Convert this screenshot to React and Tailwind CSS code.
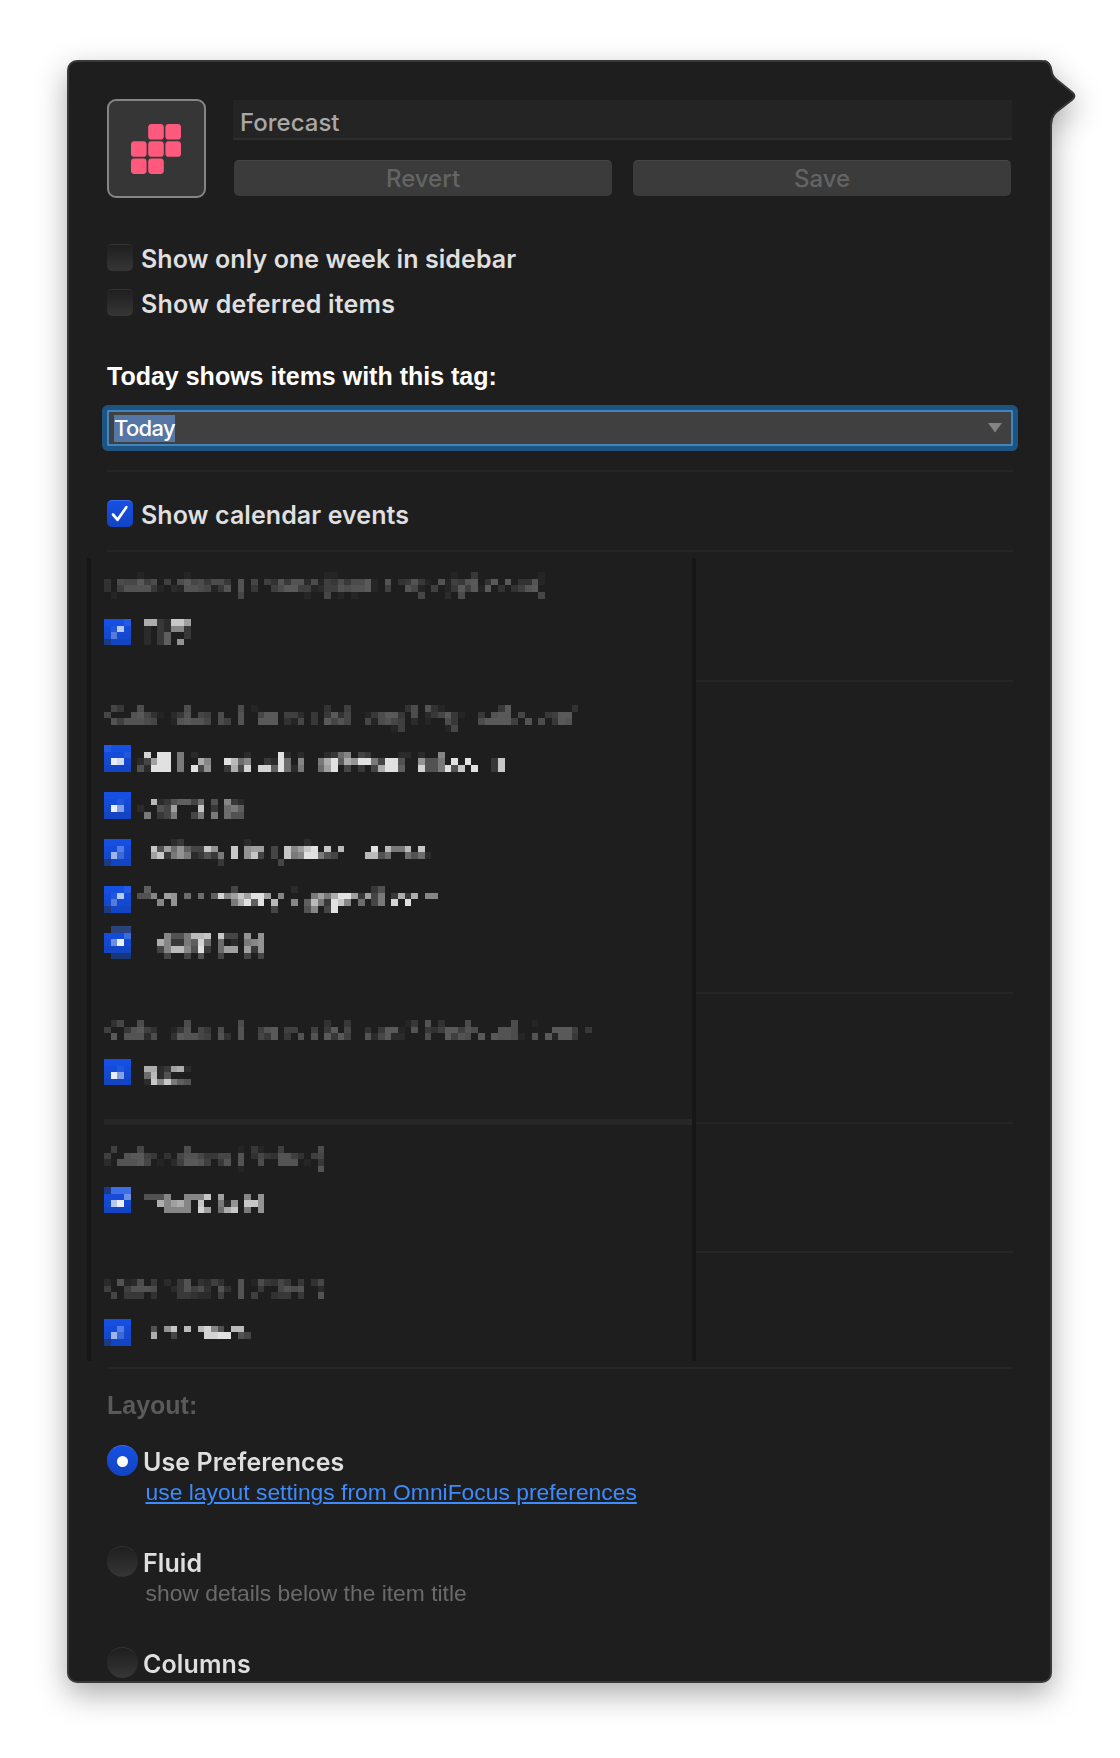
import React from "react";

const CELL = 6.68;

// Each text row is a list of "column:levels" runs; levels are hex brightness digits.
// Each box row has four characters: 0-9 white overlay, x dark, d dim, . empty.
const ROWS = [
  { gap: 14, h: 4, dim: true, text: [
    "5:1 12:1 33:11 52:1 55:4 65:1",
    "0:3 2:766957 9:5 11:79674774 20:8 22:6 24:538488271 33:54747791 42:8 44:34841 50:815489 57:39 60:9 62:3381",
    "0:3 2:5888841 10:218876148 20:8 22:4 25:57995512 33:55878891 42:5 45:861 49:5 51:14959 56:19 59:3 61:3589",
    "1:1 20:6 30:1 33:6 35:101 47:6 51:2 53:7 65:6"] },
  { gap: 20, h: 4, box: ["0001", "0170", "0300", "x000"], text: [
    "6:bb21dda", "6:1 8:21882", "6:1 8:25 12:2", "6:1 8:25 11:9"] },
  { gap: 60, h: 4, dim: true, text: [
    "1:64 5:7 12:7 20:7 22:1 33:3 36:5 45:37 48:831 59:49 70:3",
    "0:6 4:89631 10:248 14:65 17:7 20:8 23:699 27:552 31:4 33:4936 39:147994 46:7 48:246941 56:4 58:899 62:6 66:4599",
    "1:8588876 10:189886 17:75 20:8 23:999 27:316 31:4 33:9686 39:617865 46:2 48:1 51:74 56:799995 63:8 65:7 67:498",
    "43:15 51:16"] },
  { gap: 13.3, h: 4, box: ["1000", "0001", "0980", "0000"], text: [
    "", "6:e 8:ff 11:7 13:1 21:1 26:f1 29:1 33:1268 38:32 44:11 47:1 50:8",
    "5:13aff 11:7 14:b8 18:fc68 24:21f6 29:8 32:7bf5b9ff73ff4 47:9447 52:f 54:f 58:2d",
    "5:41fff 11:7 13:f39 18:2b3e 23:ee5f617 32:6af 36:3 38:2 40:3bff5 47:e447f4d 55:f 58:2d"] },
  { gap: 20.3, h: 4, box: ["0000", "0010", "0950", "0000"], text: [
    "", "7:c1245536 16:4 18:821", "5:1 8:43a 14:d 16:2 18:675", "6:7 8:237 13:37 16:7 18:644"] },
  { gap: 20.3, h: 4, box: ["0000", "0030", "0620", "x000"], text: [
    "10:12 21:1 30:1",
    "7:d4a69533d9 19:d 21:9aa 25:3 27:d8adf 33:d 35:c 40:f 42:c77c 47:d",
    "7:ad279712427 19:d 21:9d3 25:3 27:d78ff743 39:cc46 45:6461",
    "17:2 26:3"] },
  { gap: 19.7, h: 4, box: ["0001", "0170", "0300", "x000"], text: [
    "6:5 19:3 28:1 40:24",
    "5:448 9:a9 12:6 14:6 16:5e8adaffa 26:8 31:7a7bffa2a37 43:2b2b 48:88",
    "8:8 10:9 19:7bf5f 25:c 28:8 30:5c72fd8 38:6 40:37 43:e 45:f",
    "25:3 30:48 33:3f"] },
  { gap: 13.3, h: 5, box: [".ddd", "0002", "0490", "0000", ".ddd"], text: [
    "", "9:8447ccd 17:d33 21:9 23:9", "8:b82275e6 17:6 19:1 21:789", "8:38cc84f2 17:6aa 21:a29",
    "9:3 12:3 14:4 17:3 21:3 23:3"] },
  { gap: 60.3, h: 3, dim: true, text: [
    "1:36 5:7 12:7 20:7 33:3 36:4 45:14 48:8 50:3 54:7 61:7 64:1",
    "0:5 3:48953 10:148 14:64 17:7 20:8 23:589 27:55 31:5 33:49 36:6 39:3 41:4991 46:8 48:43599587 59:887 67:9995 72:4",
    "1:9 3:88827 10:398865 17:83 20:8 23:649 27:4 29:8 31:8 33:9495 39:826922 48:7 51:9587 56:9 58:98871 64:8 66:91994"] },
  { gap: 19, h: 4, box: ["0000", "0010", "0950", "0000"], text: [
    "", "6:bb12ab1", "6:6c14", "6:1d8d754"] },
  { gap: 33.3, h: 1, line: true },
  { gap: 20.3, h: 4, dim: true, text: [
    "1:5 5:6 12:7 20:1 22:41 26:5 32:7",
    "0:5 3:89954 9:3 11:68864466 20:8 22:36438853 31:56",
    "0:2 2:88896 8:1 10:259985 17:48 20:8 23:7 26:888 30:1 32:4",
    "20:1 32:8"] },
  { gap: 14.3, h: 4, box: ["x222", "0004", "0790", "0000"], text: [
    "", "6:4448 12:888d 17:a 21:8 23:9", "8:b8ab8 14:d 17:719 21:dd9", "9:8888 14:ea 17:6bd 21:7 23:9"] },
  { gap: 66, h: 3, dim: true, text: [
    "0:2 2:8127 7:4 9:2 11:48 14:3253 20:8 22:174364 29:4 31:36",
    "0:5 3:58887 10:248573 17:83 20:8 23:4 26:6878 32:2",
    "1:6 3:444 7:3 11:44322 17:5 20:8 22:5 25:344 29:4 32:8"] },
  { gap: 20, h: 4, box: ["0000", "0030", "0620", "x000"], text: [
    "", "7:4 9:9d 12:c 14:ce84 19:cc", "7:b 10:3 15:eeff 20:43"] },
];

const BLUES = ["#1550e2", "#144bd8", "#1348cf", "#1244c4", "#1a377c"];

function boxColor(ch, r) {
  if (ch === "x") return "#1b3a86";
  if (ch === "d") return r === 0 ? "#2a437c" : "#183777";
  const base = BLUES[r];
  return ch === "0" ? base : `color-mix(in srgb, white ${Number(ch) * 10.5 - 4}%, ${base})`;
}

function MosaicRow({ row }) {
  const rects = [];
  const add = (c, r, fill) =>
    rects.push(<rect key={`${c}-${r}-${rects.length}`} x={c * CELL} y={r * CELL} width={CELL} height={CELL} fill={fill} />);
  (row.box || []).forEach((line, r) =>
    [...line].forEach((ch, c) => ch !== "." && add(c, r, boxColor(ch, r))));
  (row.text || []).forEach((line, r) =>
    line.split(" ").filter(Boolean).forEach((run) => {
      const [start, levels] = run.split(":");
      [...levels].forEach((d, i) => {
        const v = parseInt(d, 16);
        if (!v) return;
        const g = 30 + v * (row.dim ? 6.6 : 13);
        add(Number(start) + i, r, `rgb(${g},${g},${g})`);
      });
    }));
  return (
    <svg
      className="block w-[588px] shrink-0"
      style={{ marginTop: row.gap, height: row.h * CELL }}
      shapeRendering="crispEdges"
      aria-hidden="true"
    >
      {row.line ? <rect width="588" height={CELL} fill="#272727" /> : rects}
    </svg>
  );
}

function CheckBox({ checked }) {
  return checked ? (
    <span className="flex h-[27px] w-[26px] items-center justify-center rounded-[5px] border-t border-[#3a6cec] bg-linear-to-b from-[#1650e4] to-[#1243c2]">
      <svg width="20" height="20" viewBox="0 0 20 20" fill="none" stroke="white" strokeWidth="2.7" strokeLinecap="round" strokeLinejoin="round">
        <path d="M3 10.5 7.6 15.8 16.3 3.2" />
      </svg>
    </span>
  ) : (
    <span className="h-[27px] w-[26px] rounded-[5px] border-t border-[#333] bg-linear-to-b from-[#1f1f1f] to-[#363636]" />
  );
}

function Check({ label, checked, className, tracking }) {
  return (
    <label className={`flex h-[27px] items-center gap-[8px] ${className}`}>
      <CheckBox checked={checked} />
      <span className={`relative top-[1.5px] text-[25px] leading-none font-semibold whitespace-nowrap text-[#dfdfdf] ${tracking}`}>{label}</span>
    </label>
  );
}

function Radio({ label, checked, detail, className }) {
  return (
    <div className={`h-[101px] shrink-0 ${className || ""}`}>
      <div className="flex h-[31px] items-center gap-[5px]">
        {checked ? (
          <span className="flex size-[31px] items-center justify-center rounded-full border-t border-[#3a6cec] bg-linear-to-b from-[#1650e4] to-[#1243c2]">
            <span className="size-[11px] rounded-full bg-white" />
          </span>
        ) : (
          <span className="size-[31px] rounded-full border-t border-[#333] bg-linear-to-b from-[#1f1f1f] to-[#363636]" />
        )}
        <span className="relative top-[1.5px] text-[25px] leading-none font-semibold tracking-[0.1px] whitespace-nowrap text-[#dfdfdf]">{label}</span>
      </div>
      <div className="mt-[2px] pl-[38.5px] font-['Liberation_Sans',sans-serif] text-[22.85px] leading-[28px] whitespace-nowrap">{detail}</div>
    </div>
  );
}

const Divider = ({ className }) => <div className={`h-[2px] shrink-0 bg-[#262626] ${className || ""}`} />;

export default function App() {
  return (
    <main className="h-[1758px] w-[1120px] overflow-hidden bg-white pt-[60px] pl-[67px] font-['Inter',sans-serif]">
      <div className="relative h-[1623px] w-[985px] drop-shadow-[0_11px_15px_rgba(0,0,0,0.33)]">
        <div className="flex h-full flex-col overflow-hidden rounded-[10px] border-2 border-[#383938] bg-[#1e1e1e] pr-[37px] pl-[38px]">
          <header className="mt-[37px] flex h-[99px] shrink-0 gap-[27px]">
            <div className="flex w-[99px] shrink-0 items-center justify-center rounded-[9px] border-2 border-[#858585] bg-[#363636] pr-px">
              <svg width="50" height="50" viewBox="0 0 50 50" fill="#ff5a7e">
                {[[17.2, 0], [34.4, 0], [0, 17.2], [17.2, 17.2], [34.4, 17.2], [0, 34.4], [17.2, 34.4]].map(([x, y]) => (
                  <rect key={`${x}-${y}`} x={x} y={y} width="15.6" height="15.6" rx="3.4" />
                ))}
              </svg>
            </div>
            <div className="min-w-0 flex-1">
              <div className="mt-px mr-px h-[40px] border-b-2 border-[#2e2e2e] bg-[#242424] pl-[7px] text-[24px] leading-[45px] text-[#a8a8a8]">
                <span className="font-medium">Forecast</span>
              </div>
              <div className="mt-[20px] flex gap-[21px] pr-[2px] pl-px">
                {["Revert", "Save"].map((t) => (
                  <button key={t} className="h-[36px] flex-1 rounded-[5px] border-t border-[#474747] bg-[#3b3b3b] text-[24px] leading-[35px] font-medium text-[#646464]">{t}</button>
                ))}
              </div>
            </div>
          </header>

          <Check className="mt-[46px] shrink-0" label="Show only one week in sidebar" tracking="tracking-[0.07px]" />
          <Check className="mt-[18px] shrink-0" label="Show deferred items" tracking="tracking-[0.2px]" />

          <h2 className="mt-[45px] shrink-0 font-['Liberation_Sans',sans-serif] text-[25px] leading-[30px] font-bold text-white">
            <span className="whitespace-nowrap">Today shows items with this tag:</span>
          </h2>
          <div className="mt-[14px] -mr-[5px] -ml-[5px] h-[46px] shrink-0 rounded-[6px] bg-[#1d5482] p-[5px]">
            <div className="flex h-full items-center justify-between border-2 border-[#3f86c0] bg-[#404040] pr-[9px] pl-[5px]">
              <span className="bg-[#5676a6] text-[22px] leading-[27px] font-medium tracking-[-0.7px] text-white">Today</span>
              <svg width="14" height="10" viewBox="0 0 14 10" fill="#838383"><path d="M0 0H14L7 9.5Z" /></svg>
            </div>
          </div>
          <Divider className="mt-[19px]" />
          <Check checked className="mt-[28px] shrink-0" label="Show calendar events" tracking="tracking-[0.07px]" />
          <Divider className="mt-[23px]" />

          <section className="mt-[6px] -ml-[20px] flex h-[803px] shrink-0">
            <div className="w-[609px] shrink-0 border-x-4 border-[#161616] pl-[12.5px]">
              <div className="flex flex-col">
                {ROWS.map((row, i) => <MosaicRow key={i} row={row} />)}
              </div>
            </div>
            <div className="flex-1 pt-[122px]">
              <Divider />
              <Divider className="mt-[310px]" />
              <Divider className="mt-[128px]" />
              <Divider className="mt-[127px]" />
            </div>
          </section>

          <Divider className="mt-[6px]" />
          <h3 className="mt-[21px] shrink-0 font-['Liberation_Sans',sans-serif] text-[25px] leading-[30px] font-bold text-[#5a5a5a]"><span>Layout:</span></h3>
          <Radio
            className="mt-[25px]"
            checked
            label="Use Preferences"
            detail={<a className="text-[#3c8bff] underline decoration-2 underline-offset-2">use layout settings from OmniFocus preferences</a>}
          />
          <Radio label="Fluid" detail={<span className="text-[#6a6a6a]">show details below the item title</span>} />
          <Radio label="Columns" />
        </div>
        <svg className="absolute top-0 left-[977px]" width="34" height="70" viewBox="0 0 34 70">
          <path d="M0 .5C5 .5 7 5 8 10 8.500 14 10 17 13 19.500L29 32.500Q33 36 29 39.500L13 52C9.500 55 8 59 8 67L0 68Z" fill="#1e1e1e" />
          <path d="M0 1C5 1 7 5 8 10 8.500 14 10 17 13 19.500L29 32.500Q33 36 29 39.500L13 52C9.500 55 7.500 59 7.500 67" transform="translate(-.6 0)" fill="none" stroke="#383938" strokeWidth="2" />
        </svg>
      </div>
    </main>
  );
}
